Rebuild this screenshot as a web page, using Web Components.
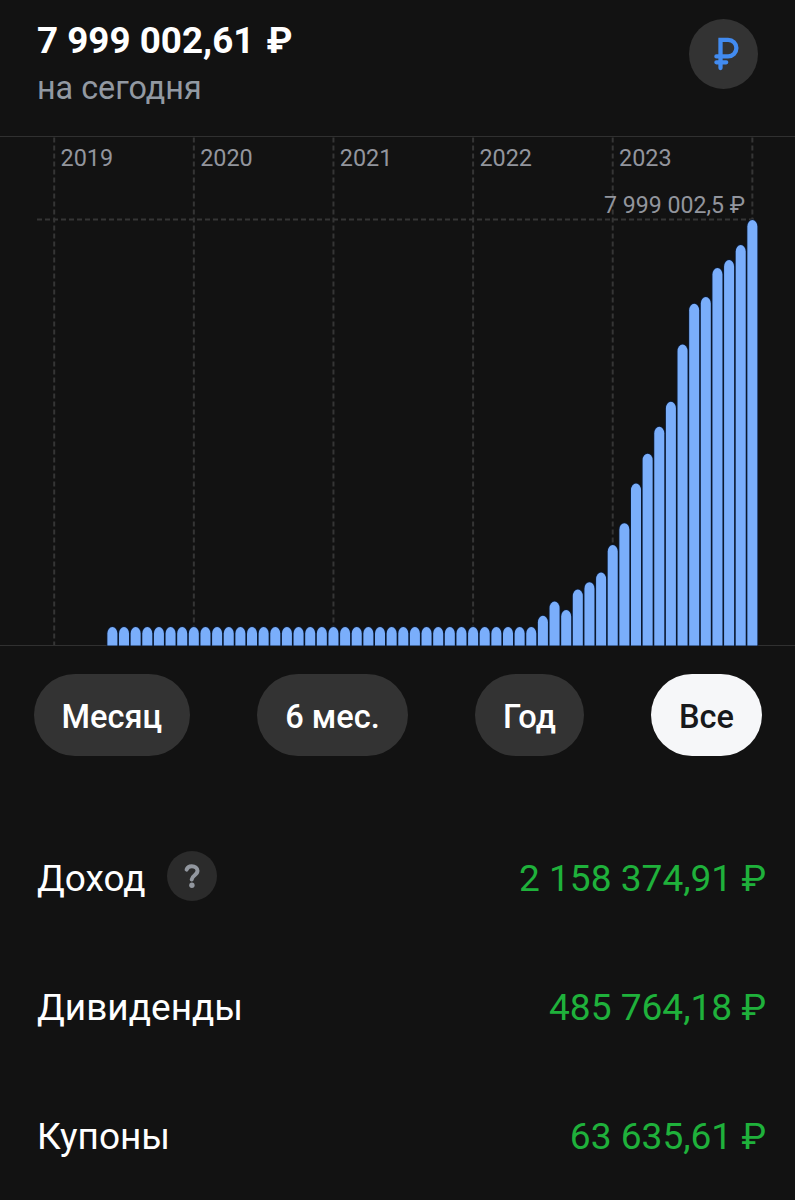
<!DOCTYPE html>
<html lang="ru">
<head>
<meta charset="utf-8">
<title>Портфель</title>
<style>
    body {
        margin: 0;
        background: #121212;
        color: #fff;
        font-family: Roboto, 'Liberation Sans', sans-serif;
    }
</style>
</head>
<body>
<portfolio-screen></portfolio-screen>

<script>
const mount = (el, html) => {
    el.attachShadow({ mode: 'open' }).innerHTML = html;
};

// --- Header: total, caption, currency button ---
class BalanceHeader extends HTMLElement {
    connectedCallback() {
        mount(this, `
<style>
    :host { display: flex; justify-content: space-between; box-sizing: border-box; height: 136px; padding: 19px 37px 0; }
    .total { padding-top: 1px; font-size: 36.8px; line-height: 42px; font-weight: 700; white-space: pre; }
    .caption { margin-top: 6px; font-size: 32.3px; line-height: 40px; color: #9299a2; }
    .currency { width: 69px; height: 70px; border-radius: 50%; background: #333; }
    svg { display: block; width: 69px; height: 70px; }
</style>
<div>
    <div class="total"><slot name="total"></slot></div>
    <div class="caption"><slot name="caption"></slot></div>
</div>
<div class="currency">
    <svg viewBox="0 0 69 70" fill="none" stroke="#428bf0" stroke-width="4.3" stroke-linecap="round" stroke-linejoin="miter">
        <path d="M31.5 49V20.800h7.600a8.100 8.100 0 0 1 0 16.600H27.400M27.400 43.300h9.800"/>
    </svg>
</div>`);
    }
}

// --- Monthly chart, one bar per month ---
class BalanceChart extends HTMLElement {
    connectedCallback() {
        const W = 795, H = 510, BASE = 509.5, STEP = 11.636, X0 = 54.2;
        const years = [2019, 2020, 2021, 2022, 2023];
        const growth = [29.7, 44, 35.5, 56, 63.3, 73, 100.5, 122.3, 162, 191.8, 218.7, 243.7, 301, 341.7, 348.5, 377.5, 385.4, 400.5, 425.4];
        const bars = [...Array(37).fill(18.4), ...growth];

        const lines = [0, 1, 2, 3, 4, 5].map(i => {
            const x = X0 + i * 12 * STEP;
            return `<path class="grid" d="M${x} 1.5V509"/>`;
        }).join('');
        const labels = years.map((y, i) =>
            `<text x="${X0 + i * 12 * STEP + 6.3}" y="30.4">${y}</text>`).join('');
        const columns = bars.map((h, i) => {
            const x = X0 + (i + 5) * STEP - 5;
            return `<path class="bar" d="M${x} ${BASE}v${6.5 - h}a5 6.5 0 0 1 10 0v${h - 6.5}z"/>`;
        }).join('');

        mount(this, `
<style>
    :host { display: block; height: 510px; }
    svg { display: block; }
    .axis { fill: #303030; }
    .grid { stroke: #353535; stroke-width: 2; stroke-dasharray: 5 3; fill: none; }
    .bar { fill: #7aaefb; stroke: #0b1c38; stroke-width: 1.6; paint-order: stroke; }
    text { fill: #92959d; font-size: 23.4px; }
    .peak { font-size: 23.1px; }
</style>
<svg width="${W}" height="${H}" viewBox="0 0 ${W} ${H}">
    <rect class="axis" width="${W}" height="1"/>
    <rect class="axis" y="509" width="${W}" height="1"/>
    ${lines}
    <path class="grid" d="M37 83.5H757"/>
    ${columns}
    ${labels}
    <text class="peak" x="745" y="76.6" text-anchor="end">7 999 002,5 ₽</text>
</svg>`);
    }
}

class PeriodChip extends HTMLElement {
    connectedCallback() {
        mount(this, `
<style>
    :host { display: flex; align-items: center; box-sizing: border-box; height: 82px; padding: 3px 28px 0; border-radius: 41px; background: #333; color: #fff; font-size: 32.6px; font-weight: 500; white-space: nowrap; }
    :host([active]) { background: #f6f7f9; color: #17191b; }
</style>
<slot></slot>`);
    }
}

class SummaryRow extends HTMLElement {
    connectedCallback() {
        const help = this.hasAttribute('help') ? `
<div class="help">
    <svg viewBox="0 0 50 50" fill="none" stroke="#92979f" stroke-width="4" stroke-linecap="round">
        <path d="M19.600 18.600c.7-2.300 2.800-3.300 5.200-3.300 3.200 0 5.700 1.700 5.700 4.500 0 4.400-5.300 4.300-5.800 8.600"/>
        <circle cx="24.900" cy="34.300" r="2.700" fill="#92979f" stroke="none"/>
    </svg>
</div>` : '';
        mount(this, `
<style>
    :host { display: flex; align-items: center; height: 129px; padding: 0 29px 0 37px; font-size: 37px; white-space: nowrap; }
    .label { padding-top: 3px; }
    .help { width: 50px; height: 50px; margin: -1px 0 0 21px; border-radius: 50%; background: #2b2b2b; }
    svg { display: block; }
    .value { margin-left: auto; padding-top: 3px; font-size: 37.1px; color: #1fb13b; }
</style>
<div class="label"><slot></slot></div>${help}
<div class="value">${this.getAttribute('value')}</div>`);
    }
}

class PortfolioScreen extends HTMLElement {
    connectedCallback() {
        mount(this, `
<style>
    :host { display: block; height: 1200px; overflow: hidden; }
    .sign { margin-left: 3px; }
    .periods { display: flex; justify-content: space-between; padding: 28px 33px 0 33.5px; }
    .summary { margin-top: 56px; }
</style>
<balance-header>
    <span slot="total">7 999 002,61 <span class="sign">₽</span></span>
    <span slot="caption">на сегодня</span>
</balance-header>
<balance-chart></balance-chart>
<div class="periods">
    <period-chip>Месяц</period-chip>
    <period-chip>6 мес.</period-chip>
    <period-chip>Год</period-chip>
    <period-chip active>Все</period-chip>
</div>
<div class="summary">
    <summary-row help value="2 158 374,91 ₽">Доход</summary-row>
    <summary-row value="485 764,18 ₽">Дивиденды</summary-row>
    <summary-row value="63 635,61 ₽">Купоны</summary-row>
</div>`);
    }
}

customElements.define('balance-header', BalanceHeader);
customElements.define('balance-chart', BalanceChart);
customElements.define('period-chip', PeriodChip);
customElements.define('summary-row', SummaryRow);
customElements.define('portfolio-screen', PortfolioScreen);
</script>
</body>
</html>
